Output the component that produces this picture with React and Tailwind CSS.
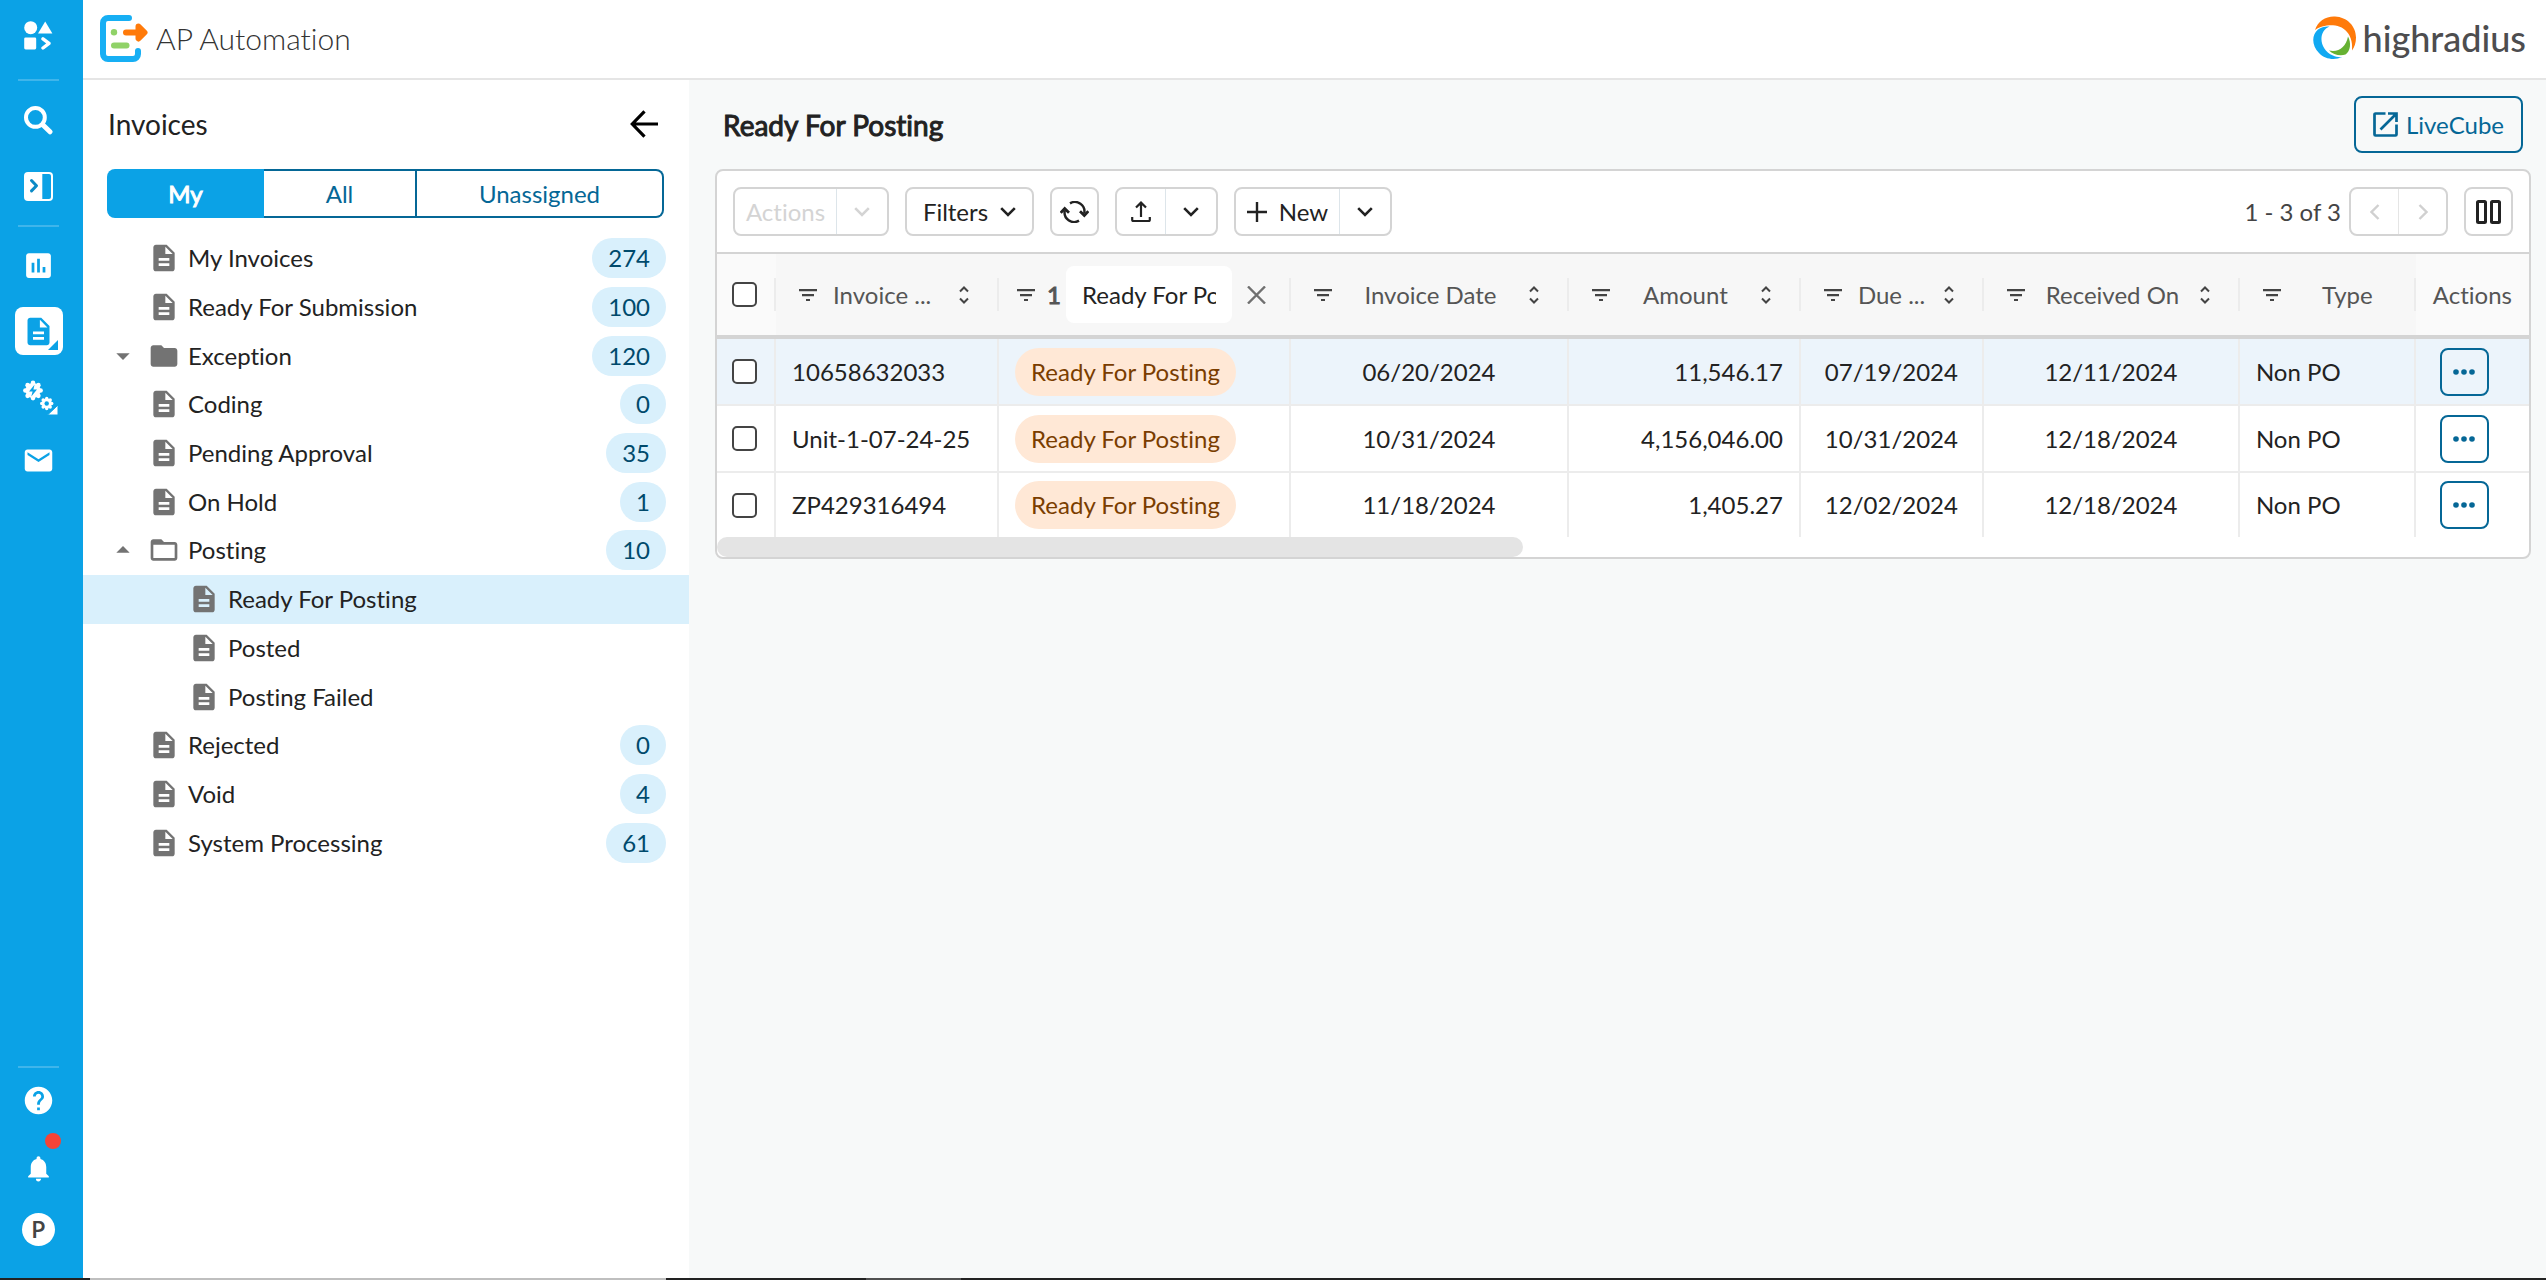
import React from "react";
import {
  MdDescription,
  MdFolder,
  MdFolderOpen,
  MdArrowDropDown,
  MdArrowDropUp,
  MdInsertChart,
  MdEmail,
  MdHelp,
  MdNotifications,
} from "react-icons/md";

const STROKE_BOLD = "[-webkit-text-stroke:1px_currentColor]";

function AppsIcon() {
  return (
    <svg width="29" height="29" viewBox="0 0 29 29" fill="#fff" aria-hidden="true">
      <circle cx="6.7" cy="6.7" r="6.5" />
      <path d="M21.2 0.4 28.4 12.6H14z" />
      <rect x="0.2" y="16.4" width="12" height="12" rx="1.4" />
      <path d="M19 17.8 25 22.4 19 27" fill="none" stroke="#fff" strokeWidth="3.4" strokeLinecap="round" strokeLinejoin="round" />
    </svg>
  );
}

function SearchIcon() {
  return (
    <svg width="29" height="29" viewBox="0 0 29 29" fill="none" stroke="#fff" aria-hidden="true">
      <circle cx="11.4" cy="11.4" r="9.4" strokeWidth="4" />
      <path d="M19 19 26 25.8" strokeWidth="5" strokeLinecap="round" />
    </svg>
  );
}

function PanelIcon() {
  return (
    <svg width="29" height="29" viewBox="0 0 29 29" aria-hidden="true">
      <rect width="29" height="29" rx="4" fill="#fff" />
      <path d="M18.300 2H25a2 2 0 0 1 2 2v21a2 2 0 0 1-2 2h-6.700z" fill="#0ba2e6" />
      <path d="M7.500 8.500 12.500 13.700 7.500 18.900" fill="none" stroke="#0b8ac6" strokeWidth="3" strokeLinecap="round" strokeLinejoin="round" />
    </svg>
  );
}

function Gear({ cx, cy, r, tooth }) {
  const teeth = [0, 45, 90, 135, 180, 225, 270, 315];
  return (
    <g fill="#fff">
      <circle cx={cx} cy={cy} r={r} />
      {teeth.map((a) => (
        <circle
          key={a}
          cx={cx + r * Math.cos((a * Math.PI) / 180)}
          cy={cy + r * Math.sin((a * Math.PI) / 180)}
          r={tooth}
        />
      ))}
    </g>
  );
}

function GearsIcon() {
  return (
    <svg width="35" height="35" viewBox="0 0 35 35" aria-hidden="true">
      <Gear cx={10} cy={10.500} r={7.600} tooth={2.300} />
      <path d="M11.500 4.800 6 11.600h3.600L8.300 16.600 14 9.600h-3.600z" fill="#0ba2e6" />
      <Gear cx={23.700} cy={23.500} r={5} tooth={1.700} />
      <circle cx="23.700" cy="23.500" r="2.200" fill="#0ba2e6" />
      <path d="M35 25v10H24.500z" fill="#fff" stroke="#0ba2e6" strokeWidth="1" />
    </svg>
  );
}

function ProductLogo() {
  return (
    <svg width="48" height="47" viewBox="0 0 48 47" fill="none" aria-hidden="true">
      <path
        d="M29 3H8a5 5 0 0 0-5 5v31a5 5 0 0 0 5 5h25a5 5 0 0 0 5-5v-3"
        stroke="#17aff4"
        strokeWidth="6"
        strokeLinecap="round"
      />
      <circle cx="14" cy="17.300" r="3.200" fill="#90d268" />
      <path d="M14 30.500h12.500" stroke="#90d268" strokeWidth="6" strokeLinecap="round" />
      <path d="M26 17.500h14" stroke="#ff7a0a" strokeWidth="6" strokeLinecap="round" />
      <path d="M38.500 11.500 44.500 17.500 38.500 23.500z" fill="#ff7a0a" stroke="#ff7a0a" strokeWidth="6" strokeLinejoin="round" />
    </svg>
  );
}

function BrandMark() {
  return (
    <svg width="44" height="44" viewBox="0 0 44 44" aria-hidden="true">
      <path d="M2 14C5 5 13 0 22 0.500 34 1 43 10 43 21.500 43 27 41.500 31 39 34.500 40.500 21 33 10 20 9.300 13 9 6 11 2 14z" fill="#ff7a0a" />
      <path d="M16.500 10.500C5 15 5.500 33 20 39.500 22.500 40.700 26 41.500 29 41 22 44.500 12 43.500 6 37 -1.500 29.500-1.500 19 5 13.500 8.500 11 12.500 10 16.500 10.500z" fill="#11a9f2" />
      <path d="M35 20.500C38.500 27 37.500 35 32.500 38.500 27 40.500 20 38.500 16 34.500 26 36.500 33 31 35 20.500z" fill="#66b132" />
    </svg>
  );
}

function Chevron({ color = "#222" }) {
  return (
    <svg width="16" height="10" viewBox="0 0 16 10" fill="none" stroke={color} strokeWidth="2.600" aria-hidden="true">
      <path d="M1.200 1.200 8 8l6.800-6.800" />
    </svg>
  );
}

function SideChevron({ right }) {
  return (
    <svg width="10" height="16" viewBox="0 0 10 16" fill="none" stroke="#d0d0d0" strokeWidth="2.400" aria-hidden="true">
      <path d={right ? "M1.500 1 8.500 8l-7 7" : "M8.500 1 1.500 8l7 7"} />
    </svg>
  );
}

function FilterLines() {
  return (
    <svg width="18" height="12" viewBox="0 0 18 12" fill="#444" aria-hidden="true">
      <path d="M0 0h18v2.200H0zM3 5h12v2.200H3zM7 10h4v2H7z" />
    </svg>
  );
}

function SortIcon() {
  return (
    <svg width="10" height="18" viewBox="0 0 10 18" fill="none" stroke="#444" strokeWidth="2" aria-hidden="true">
      <path d="M1 5.500 5 1.500l4 4M1 12.500l4 4 4-4" />
    </svg>
  );
}

function RefreshIcon() {
  return (
    <svg width="29" height="22" viewBox="0 0 29 22" fill="none" stroke="#222" strokeWidth="2.400" aria-hidden="true">
      <path d="M10 2.400A9.500 9.500 0 0 1 24.200 12.500M19 19.600A9.500 9.500 0 0 1 4.800 9.500" />
      <path d="M20 10.200 24.300 14.500 28.300 10.200M0.700 11.800 4.700 7.500 9 11.800" strokeWidth="2.800" />
    </svg>
  );
}

function UploadIcon() {
  return (
    <svg width="20" height="21" viewBox="0 0 20 21" fill="none" stroke="#222" strokeWidth="2.200" aria-hidden="true">
      <path d="M10 16V2M5 6.500 10 1.600l5 4.900M1.200 16v3a1 1 0 0 0 1 1h15.600a1 1 0 0 0 1-1v-3" />
    </svg>
  );
}

function OpenIcon() {
  return (
    <svg width="25" height="25" viewBox="0 0 25 25" fill="none" stroke="#056796" strokeWidth="2.700" aria-hidden="true">
      <path d="M12.500 1.500H2.500a1 1 0 0 0-1 1v20a1 1 0 0 0 1 1h20a1 1 0 0 0 1-1V12.500" />
      <path d="M15 1.500h8.500V10M23 2 7.500 17.500" />
    </svg>
  );
}

function ColumnsIcon() {
  return (
    <svg width="25" height="24" viewBox="0 0 25 24" fill="none" stroke="#222" strokeWidth="3" aria-hidden="true">
      <rect x="1.500" y="1.500" width="8" height="21" rx="1" />
      <rect x="15.500" y="1.500" width="8" height="21" rx="1" />
    </svg>
  );
}

function RailRule() {
  return <div className="h-[2px] w-[41px] shrink-0 bg-[#3fb5eb]" />;
}

function RailButton({ label, className, children }) {
  return (
    <button type="button" aria-label={label} className={"flex w-full shrink-0 items-center justify-center " + className}>
      {children}
    </button>
  );
}

function Rail() {
  return (
    <nav aria-label="Main" className="flex w-[83px] shrink-0 flex-col items-center bg-[#0ba2e6] pr-[6px] pb-6 text-white">
      <RailButton label="Apps" className="h-[71px]">
        <AppsIcon />
      </RailButton>
      <div className="h-2" />
      <RailRule />
      <RailButton label="Search" className="h-[78px]">
        <SearchIcon />
      </RailButton>
      <RailButton label="Expand panel" className="h-[54px]">
        <PanelIcon />
      </RailButton>
      <div className="h-3" />
      <RailRule />
      <RailButton label="Dashboard" className="h-[77px]">
        <MdInsertChart size={33} />
      </RailButton>
      <RailButton label="Invoices" className="h-[54px]">
        <span className="relative flex size-12 items-center justify-center rounded-lg bg-white text-[#0ba2e6]">
          <MdDescription size={33} />
          <svg className="absolute right-[5px] bottom-[5px]" width="10" height="10" viewBox="0 0 10 10" aria-hidden="true">
            <path d="M10 0v10H0z" fill="#0ba2e6" />
          </svg>
        </span>
      </RailButton>
      <RailButton label="Automation settings" className="h-[78px] pl-1">
        <GearsIcon />
      </RailButton>
      <RailButton label="Mail" className="h-12">
        <MdEmail size={33} />
      </RailButton>
      <div className="flex-1" />
      <RailRule />
      <RailButton label="Help" className="h-16">
        <MdHelp size={33} />
      </RailButton>
      <RailButton label="Notifications" className="h-[72px]">
        <span className="relative flex">
          <MdNotifications size={31} />
          <span className="absolute -top-5 left-[22px] size-4 rounded-full bg-[#f44336]" />
        </span>
      </RailButton>
      <RailButton label="Profile" className="h-[50px]">
        <span className="flex size-[33px] items-center justify-center rounded-full bg-white font-['Open_Sans',sans-serif] text-[24px] font-semibold text-[#444]">
          P
        </span>
      </RailButton>
    </nav>
  );
}

const TREE = [
  { label: "My Invoices", count: 274 },
  { label: "Ready For Submission", count: 100 },
  { label: "Exception", count: 120, folder: "closed" },
  { label: "Coding", count: 0 },
  { label: "Pending Approval", count: 35 },
  { label: "On Hold", count: 1 },
  { label: "Posting", count: 10, folder: "open" },
  { label: "Ready For Posting", child: true, selected: true },
  { label: "Posted", child: true },
  { label: "Posting Failed", child: true },
  { label: "Rejected", count: 0 },
  { label: "Void", count: 4 },
  { label: "System Processing", count: 61 },
];

function TreeRow({ item }) {
  return (
    <li className={"flex items-center pr-[23px] pl-6 " + (item.selected ? "bg-[#d9f0fc]" : "")}>
      <button type="button" className="flex flex-1 items-center text-left text-[#222]">
        <span className={"flex shrink-0 text-[#737373] " + (item.child ? "w-[81px]" : "w-[41px]")}>
          {item.folder === "closed" && <MdArrowDropDown size={32} />}
          {item.folder === "open" && <MdArrowDropUp size={32} />}
        </span>
        <span className="mr-2 text-[#737373]">
          {item.folder === "closed" ? (
            <MdFolder size={32} />
          ) : item.folder === "open" ? (
            <MdFolderOpen size={32} />
          ) : (
            <MdDescription size={32} />
          )}
        </span>
        {item.label}
      </button>
      {item.count !== undefined && (
        <span className="flex h-10 items-center rounded-full bg-[#d9f0fc] px-4 text-[#004a6c]">{item.count}</span>
      )}
    </li>
  );
}

function InvoicePanel() {
  return (
    <aside className="w-[606px] shrink-0 bg-white">
      <div className="flex h-[88px] items-center justify-between pr-[31px] pl-[25px]">
        <h2 className="text-[28px] text-[#222]">Invoices</h2>
        <button type="button" aria-label="Collapse panel">
          <svg width="28" height="28" viewBox="0 0 28 28" fill="none" stroke="#000" strokeWidth="3.200" aria-hidden="true">
            <path d="M28 14H2.500M14.500 1.300 2.300 14l12.200 12.700" />
          </svg>
        </button>
      </div>
      <div className="mt-px mr-[25px] ml-6 flex h-[49px] text-[#056796]">
        <button type="button" className={"w-[157px] rounded-l-lg bg-[#0ba2e6] text-white " + STROKE_BOLD}>
          My
        </button>
        <button type="button" className="w-[153px] border-y-2 border-r-2 border-[#056796]">
          All
        </button>
        <button type="button" className="flex-1 rounded-r-lg border-y-2 border-r-2 border-[#056796]">
          Unassigned
        </button>
      </div>
      <ul className="mt-4 grid h-[633px] auto-rows-fr">
        {TREE.map((item) => (
          <TreeRow key={item.label} item={item} />
        ))}
      </ul>
    </aside>
  );
}

const BTN = "flex h-[49px] shrink-0 items-center justify-center rounded-lg border-2 border-[#d4d4d4] bg-white text-[#222]";

function Toolbar() {
  return (
    <div className="flex items-center gap-4 border-b-2 border-[#d4d4d4] p-4">
      <div className={BTN + " w-[156px]"}>
        <button type="button" disabled className="flex-1 text-[#d4d4d4]">
          Actions
        </button>
        <button type="button" disabled aria-label="More actions" className="flex h-full w-[51px] items-center justify-center border-l border-[#dde5ea]">
          <Chevron color="#d4d4d4" />
        </button>
      </div>
      <button type="button" className={BTN + " w-[129px] gap-3"}>
        Filters <Chevron />
      </button>
      <button type="button" aria-label="Refresh" className={BTN + " w-[49px]"}>
        <RefreshIcon />
      </button>
      <div className={BTN + " w-[103px]"}>
        <button type="button" aria-label="Upload" className="flex h-full flex-1 items-center justify-center">
          <UploadIcon />
        </button>
        <button type="button" aria-label="Upload options" className="flex h-full w-[51px] items-center justify-center border-l border-[#dde5ea]">
          <Chevron />
        </button>
      </div>
      <div className={BTN + " w-[158px]"}>
        <button type="button" className="flex h-full flex-1 items-center justify-center gap-3">
          <svg width="20" height="20" viewBox="0 0 20 20" stroke="#222" strokeWidth="2.400" aria-hidden="true">
            <path d="M10 0v20M0 10h20" />
          </svg>
          New
        </button>
        <button type="button" aria-label="New options" className="flex h-full w-[51px] items-center justify-center border-l border-[#dde5ea]">
          <Chevron />
        </button>
      </div>
      <div className="ml-auto flex items-center gap-2">
        <span className="text-[#444]">1 - 3 of 3</span>
        <div className={BTN + " w-[99px]"}>
          <button type="button" disabled aria-label="Previous page" className="flex h-full flex-1 items-center justify-center">
            <SideChevron />
          </button>
          <button type="button" disabled aria-label="Next page" className="flex h-full flex-1 items-center justify-center border-l border-[#e5e5e5]">
            <SideChevron right />
          </button>
        </div>
      </div>
      <button type="button" aria-label="Columns" className={BTN + " w-[49px]"}>
        <ColumnsIcon />
      </button>
    </div>
  );
}

const ROWS = [
  { id: "10658632033", date: "06/20/2024", amount: "11,546.17", due: "07/19/2024", received: "12/11/2024" },
  { id: "Unit-1-07-24-25", date: "10/31/2024", amount: "4,156,046.00", due: "10/31/2024", received: "12/18/2024" },
  { id: "ZP429316494", date: "11/18/2024", amount: "1,405.27", due: "12/02/2024", received: "12/18/2024" },
];

function HeadCell({ label, cut = false, sortable = true }) {
  return (
    <th className="p-0 font-normal">
      <div className={"flex h-[33px] items-center border-r-2 border-[#ececec] pl-[23px] " + (sortable ? "pr-7" : "")}>
        <button type="button" aria-label={"Filter " + label}>
          <FilterLines />
        </button>
        <span className={"flex-1 whitespace-nowrap " + (cut ? "pl-4 text-left" : "text-center")}>{label}</span>
        {sortable && (
          <button type="button" aria-label={"Sort " + label}>
            <SortIcon />
          </button>
        )}
      </div>
    </th>
  );
}

function Check({ label }) {
  return (
    <input
      type="checkbox"
      aria-label={label}
      className="block size-[25px] appearance-none rounded-[5px] border-2 border-[#444] bg-white"
    />
  );
}

function InvoiceTable() {
  return (
    <table className="w-full table-fixed border-separate border-spacing-0">
      <colgroup>
        <col className="w-[3.260%]" />
        <col className="w-[12.310%]" />
        <col className="w-[16.110%]" />
        <col className="w-[15.340%]" />
        <col className="w-[12.800%]" />
        <col className="w-[10.100%]" />
        <col className="w-[14.130%]" />
        <col className="w-[9.710%]" />
        <col className="w-[6.240%]" />
      </colgroup>
      <thead>
        <tr className="h-[85px] bg-[#f7f7f7] text-[#555] [&>th]:border-b-4 [&>th]:border-[#d4d4d4]">
          <th className="bg-[#fafafa] p-0">
            <div className="flex h-[33px] items-center border-r-2 border-[#ececec] pl-[15px]">
              <Check label="Select all invoices" />
            </div>
          </th>
          <HeadCell label="Invoice ..." cut />
          <th className="p-0 font-normal">
            <div className="flex h-[33px] items-center border-r-2 border-[#ececec] pl-[18px]">
              <button type="button" aria-label="Filter status" className="flex items-center gap-3">
                <FilterLines />
                <span className={STROKE_BOLD}>1</span>
              </button>
              <div className="ml-[5px] h-[57px] w-[166px] rounded-lg bg-white px-4">
                <input
                  type="text"
                  aria-label="Status filter"
                  defaultValue="Ready For Posting"
                  className="h-full w-full text-[#222]"
                />
              </div>
              <button type="button" aria-label="Clear status filter" className="ml-[15px]">
                <svg width="19" height="18" viewBox="0 0 19 18" stroke="#707070" strokeWidth="2.400" aria-hidden="true">
                  <path d="M1 .5l17 17M18 .5l-17 17" />
                </svg>
              </button>
            </div>
          </th>
          <HeadCell label="Invoice Date" />
          <HeadCell label="Amount" />
          <HeadCell label="Due ..." cut />
          <HeadCell label="Received On" />
          <HeadCell label="Type" sortable={false} />
          <th className="bg-[#fafafa] p-0 text-center font-normal">Actions</th>
        </tr>
      </thead>
      <tbody className="text-[#222]">
        {ROWS.map((row, i) => (
          <tr
            key={row.id}
            className={
              "[&>td]:border-[#ececec] [&>td:not(:last-child)]:border-r-2 " +
              (i === 0 ? "bg-[#ecf4fb] " : "") +
              (i < 2 ? "h-[67px] [&>td]:border-b-2" : "h-16")
            }
          >
            <td className="p-0 pl-[15px]">
              <Check label={"Select " + row.id} />
            </td>
            <td className="p-0 pl-4">{row.id}</td>
            <td className="p-0 pl-4">
              <span className="inline-flex h-12 items-center rounded-full bg-[#ffe8d6] px-4 align-middle text-[#7a3d00]">
                Ready For Posting
              </span>
            </td>
            <td className="p-0 text-center">{row.date}</td>
            <td className="p-0 pr-4 text-right">{row.amount}</td>
            <td className="p-0 text-center">{row.due}</td>
            <td className="p-0 text-center">{row.received}</td>
            <td className="p-0 pl-4">Non PO</td>
            <td className="p-0 pl-6">
              <button
                type="button"
                aria-label={"Actions for " + row.id}
                className="flex h-12 w-[49px] items-center justify-center rounded-lg border-2 border-[#056796]"
              >
                <svg width="22" height="6" viewBox="0 0 22 6" fill="#056796" aria-hidden="true">
                  <circle cx="3" cy="3" r="2.800" />
                  <circle cx="11" cy="3" r="2.800" />
                  <circle cx="19" cy="3" r="2.800" />
                </svg>
              </button>
            </td>
          </tr>
        ))}
      </tbody>
    </table>
  );
}

export default function App() {
  return (
    <div className="flex h-screen flex-col font-['Lato',sans-serif] text-[24px] leading-[30px] [font-variant-ligatures:none]">
      <div className="flex min-h-0 flex-1">
        <Rail />
        <div className="flex min-w-0 flex-1 flex-col">
          <header className="flex h-20 shrink-0 items-center border-b-2 border-[#e5e5e5] bg-white pr-5 pb-[2px] pl-[17px]">
            <ProductLogo />
            <h1 className="ml-2 text-[30px] font-light text-[#333]">AP Automation</h1>
            <div className="ml-auto flex items-center gap-[6px]">
              <BrandMark />
              <span className="text-[36px] leading-[44px] font-medium text-[#4d4d4f]">highradius</span>
            </div>
          </header>
          <div className="flex min-h-0 flex-1">
            <InvoicePanel />
            <main className="min-w-0 flex-1 bg-[#f7f9f9] pr-[15px] pl-[26px]">
              <div className="flex h-[89px] items-center justify-between pr-2 pl-2">
                <h2 className={"text-[28px] text-[#222] " + STROKE_BOLD}>Ready For Posting</h2>
                <button
                  type="button"
                  className="flex h-[57px] w-[169px] items-center justify-center gap-2 rounded-lg border-2 border-[#056796] text-[#056796]"
                >
                  <OpenIcon />
                  LiveCube
                </button>
              </div>
              <section className="overflow-hidden rounded-lg border-2 border-[#d4d4d4] bg-white">
                <Toolbar />
                <InvoiceTable />
                <div className="h-5">
                  <div className="h-full w-[44.500%] rounded-full bg-[#e4e4e4]" />
                </div>
              </section>
            </main>
          </div>
        </div>
      </div>
      <div className="flex h-[2px] shrink-0 bg-[#222]">
        <div className="ml-[90px] w-[576px] bg-[#bfbfbf]" />
        <div className="ml-[200px] w-[95px] bg-[#505050]" />
      </div>
    </div>
  );
}
